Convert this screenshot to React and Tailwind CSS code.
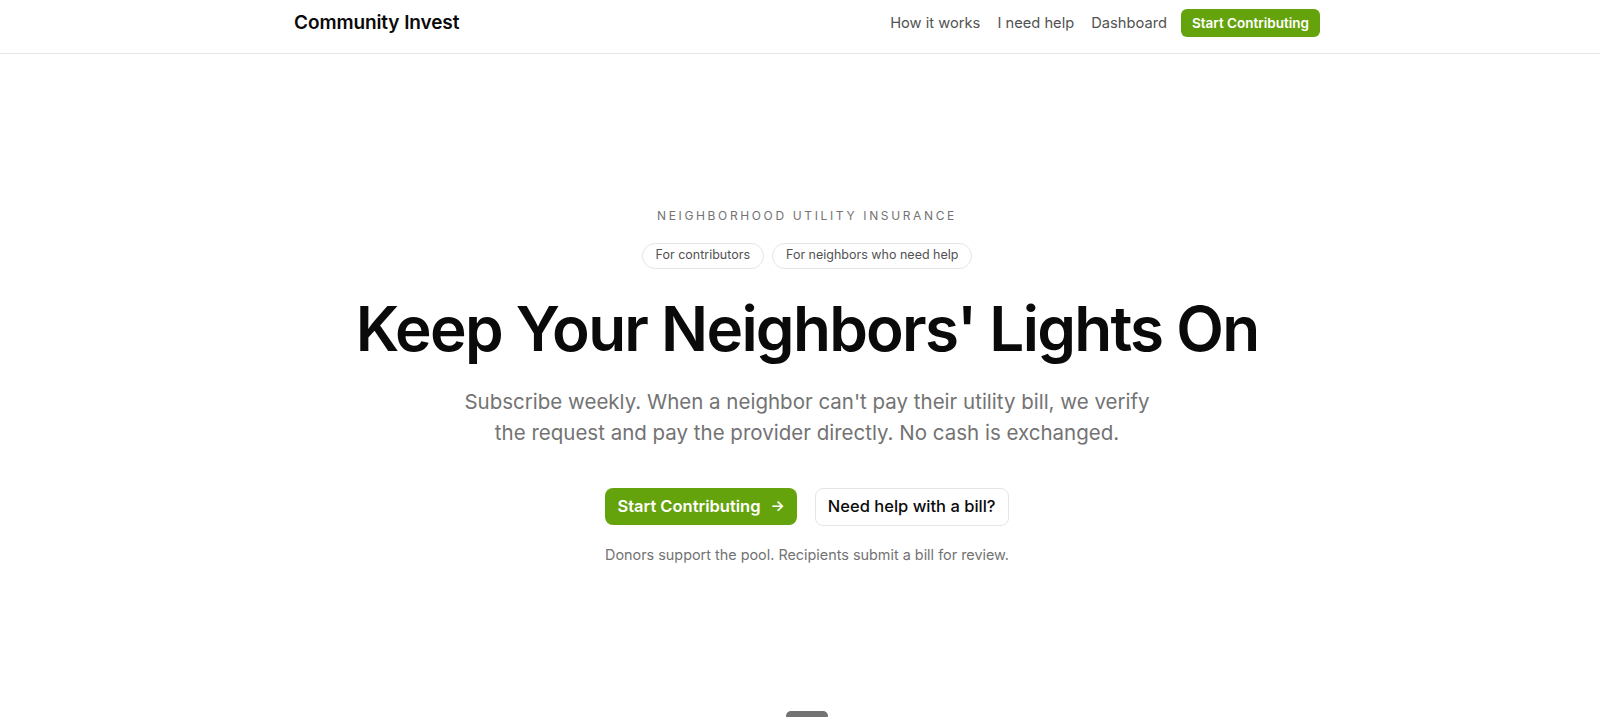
import React from "react";

const Header = () => {
  return (
    <header className="border-b border-neutral-200 bg-white pl-[14px]">
      <div className="mx-auto flex w-[1026px] items-center justify-between pt-[9px] pb-[15px]">
        <a className="text-[19px] font-semibold tracking-[-0.005em] text-neutral-950">
          Community Invest
        </a>
        <nav className="flex items-center gap-[17px] text-[14.7px] text-neutral-600">
          <a>How it works</a>
          <a>I need help</a>
          <a>Dashboard</a>
          <a className="ml-[-3px] flex h-[28px] items-center rounded-md bg-[#65a30d] px-[11px] text-[13.5px] font-semibold text-white">
            Start Contributing
          </a>
        </nav>
      </div>
    </header>
  );
};

const Hero = () => {
  return (
    <section className="flex h-[657px] flex-col items-center justify-center pt-[8px] pl-[14px] text-center">
      <p className="text-[12px] leading-4 tracking-[0.22em] text-neutral-500">
        NEIGHBORHOOD UTILITY INSURANCE
      </p>
      <div className="mt-[19px] flex gap-[8px]">
        <span className="flex h-[26px] items-center rounded-full border border-neutral-200 px-[13px] text-[12.5px] text-neutral-600">
          For contributors
        </span>
        <span className="flex h-[26px] items-center rounded-full border border-neutral-200 px-[13px] text-[12.5px] text-neutral-600">
          For neighbors who need help
        </span>
      </div>
      <h1 className="mt-[29px] text-[62px] font-semibold leading-none tracking-[-0.028em] text-neutral-950">
        Keep Your Neighbors' Lights On
      </h1>
      <p className="mt-[26px] max-w-[700px] text-[20.5px] leading-[31px] text-neutral-500">
        Subscribe weekly. When a neighbor can't pay their utility bill, we verify
        the request and pay the provider directly. No cash is exchanged.
      </p>
      <div className="mt-[40px] flex items-center gap-[18px]">
        <button className="flex h-[37px] items-center gap-[10px] rounded-lg bg-[#65a30d] px-[12px] text-[16.5px] font-semibold text-white">
          Start Contributing
          <span className="text-[15px]">→</span>
        </button>
        <button className="flex h-[38px] items-center rounded-lg border border-neutral-200 bg-white px-[12px] text-[16.5px] font-medium text-neutral-950">
          Need help with a bill?
        </button>
      </div>
      <p className="mt-[19px] text-[14.4px] leading-5 text-neutral-500">
        Donors support the pool. Recipients submit a bill for review.
      </p>
    </section>
  );
};

export default function App() {
  return (
    <div className="min-h-screen overflow-hidden bg-white font-['Inter',sans-serif]">
      <Header />
      <Hero />
      <div className="pl-[14px]">
        <div className="mx-auto h-[10px] w-[42px] rounded-md bg-neutral-500" />
      </div>
    </div>
  );
}
